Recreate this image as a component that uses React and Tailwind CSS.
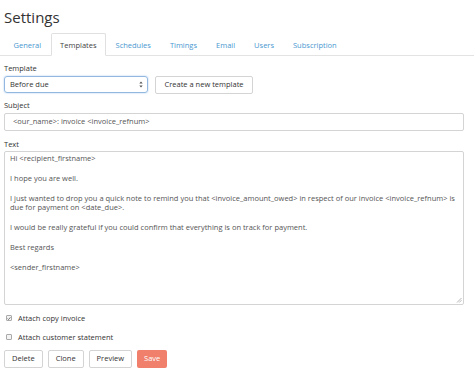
import React, { useState } from 'react';

const tabs = ['General', 'Templates', 'Schedules', 'Timings', 'Email', 'Users', 'Subscription'];

const paragraphs = [
  'Hi <recipient_firstname>',
  'I hope you are well.',
  'I just wanted to drop you a quick note to remind you that <invoice_amount_owed> in respect of our invoice <invoice_refnum> is due for payment on <date_due>.',
  'I would be really grateful if you could confirm that everything is on track for payment.',
  'Best regards',
  '<sender_firstname>',
];

const Checkbox = ({ checked, onChange, label }) => (
  <label className="flex items-center gap-[5px] text-[7.5px] leading-[10px] cursor-pointer" onClick={onChange}>
    <span className="w-[6px] h-[6px] ml-[2px] border border-[#aaa] rounded-[1px] bg-[#f4f4f4] flex items-center justify-center">
      {checked && (
        <svg width="5" height="5" viewBox="0 0 5 5">
          <path d="M0.7 2.6L1.9 3.8L4.3 1" stroke="#444" strokeWidth="0.9" fill="none" />
        </svg>
      )}
    </span>
    <span className="ml-[1px]">{label}</span>
  </label>
);

const App = () => {
  const [activeTab, setActiveTab] = useState('Templates');
  const [copyInvoice, setCopyInvoice] = useState(true);
  const [statement, setStatement] = useState(false);

  return (
    <div className="w-[474px] h-[386px] bg-white text-[#333] font-['Open_Sans',sans-serif] overflow-hidden">
      {/* Header */}
      <h1 className="pl-[4px] pt-[7px] text-[15px] leading-[20px] text-[#333]">Settings</h1>

      {/* Tabs */}
      <div className="mt-[6px] pl-[4px] flex border-b border-[#e3e3e3] h-[23px]">
        {tabs.map((tab) => (
          <button
            key={tab}
            onClick={() => setActiveTab(tab)}
            className={`px-[8.5px] text-[7.5px] leading-[22px] h-[23px] ${
              activeTab === tab
                ? 'bg-white border border-[#e0e0e0] border-b-white text-[#444] rounded-t-[2px]'
                : 'border border-transparent text-[#4a98d0]'
            }`}
          >
            {tab}
          </button>
        ))}
      </div>

      <div className="px-[4px]">
        {/* Template */}
        <div className="mt-[7px] text-[7.5px] leading-[10px]">Template</div>
        <div className="mt-[3px] flex items-start gap-[7px]">
          <div className="w-[144px] h-[17px] border border-[#93b8e0] rounded-[3px] flex items-center justify-between pl-[5px] pr-[4px] text-[7.5px] shadow-[0_0_2px_#a9cbef]">
            <span>Before due</span>
            <svg width="4" height="7" viewBox="0 0 4 7">
              <path d="M0.3 2.6L2 0.6L3.7 2.6Z M0.3 4.4L2 6.4L3.7 4.4Z" fill="#555" />
            </svg>
          </div>
          <button className="w-[98px] h-[18px] border border-[#d4d4d4] rounded-[2px] text-[7.5px] text-[#333] bg-white">
            Create a new template
          </button>
        </div>

        {/* Subject */}
        <div className="mt-[6px] text-[7.5px] leading-[10px]">Subject</div>
        <div className="mt-[3px] w-[460px] h-[18px] border border-[#d4d4d4] rounded-[2px] flex items-center px-[8px] text-[7.5px] text-[#555]">
          {'<our_name>: invoice <invoice_refnum>'}
        </div>

        {/* Text */}
        <div className="mt-[8px] text-[7.5px] leading-[10px]">Text</div>
        <div className="mt-[2px] relative h-[154px] w-[460px] border border-[#d4d4d4] rounded-[2px] pl-[5px] pr-[8px] pt-[2px] text-[7.5px] leading-[9px] text-[#555]">
          {paragraphs.map((p, i) => (
            <p key={i} className="mb-[11px]">{p}</p>
          ))}
          <svg className="absolute right-[1px] bottom-[1px]" width="6" height="6" viewBox="0 0 6 6">
            <path d="M5.5 1L1 5.5M5.5 3.2L3.2 5.5" stroke="#999" strokeWidth="0.7" />
          </svg>
        </div>

        {/* Checkboxes */}
        <div className="mt-[8px]">
          <Checkbox checked={copyInvoice} onChange={() => setCopyInvoice(!copyInvoice)} label="Attach copy invoice" />
        </div>
        <div className="mt-[9px]">
          <Checkbox checked={statement} onChange={() => setStatement(!statement)} label="Attach customer statement" />
        </div>

        {/* Actions */}
        <div className="mt-[8px] flex gap-[5px]">
          <button className="h-[18px] px-[7px] border border-[#d4d4d4] rounded-[2px] text-[7.5px] text-[#333]">Delete</button>
          <button className="h-[18px] px-[7px] border border-[#d4d4d4] rounded-[2px] text-[7.5px] text-[#333]">Clone</button>
          <button className="h-[18px] px-[7px] border border-[#d4d4d4] rounded-[2px] text-[7.5px] text-[#333]">Preview</button>
          <button className="h-[18px] px-[7px] rounded-[2px] text-[7.5px] bg-[#f0806b] text-white">Save</button>
        </div>
      </div>
    </div>
  );
};

export default App;
